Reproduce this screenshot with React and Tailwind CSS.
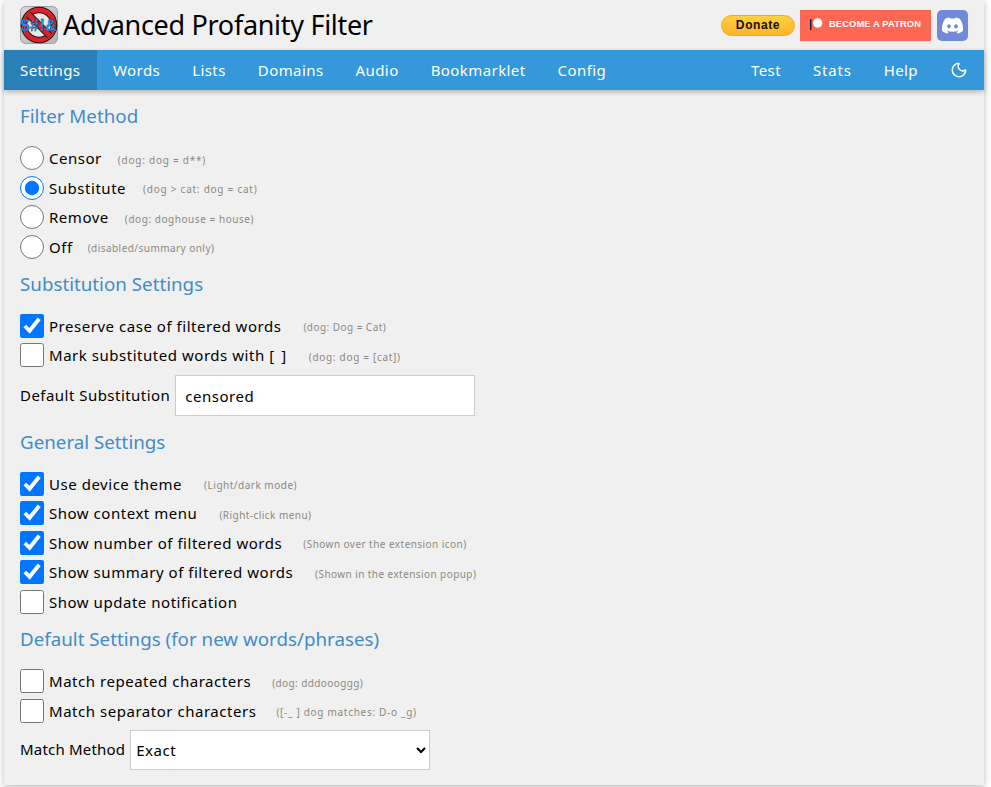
import React from 'react';
import { Moon } from 'lucide-react';
import { FaDiscord } from 'react-icons/fa';

const navLeft = ['Settings', 'Words', 'Lists', 'Domains', 'Audio', 'Bookmarklet', 'Config'];
const navRight = ['Test', 'Stats', 'Help'];

function Logo() {
  return (
    <svg width="38" height="38" viewBox="0 0 38 38" className="shrink-0">
      <defs>
        <linearGradient id="logoBg" x1="0" y1="0" x2="1" y2="1">
          <stop offset="0" stopColor="#d8d8d8" />
          <stop offset="1" stopColor="#b4b4b4" />
        </linearGradient>
      </defs>
      <rect x="0.5" y="0.5" width="37" height="37" rx="5" fill="url(#logoBg)" stroke="#a0a0a0" />
      <circle cx="19" cy="19" r="15" fill="#e8e8e8" stroke="#1a1a1a" strokeWidth="6.5" />
      <circle cx="19" cy="19" r="15" fill="none" stroke="#e3202a" strokeWidth="4.5" />
      <path d="M8.5 8.5 L29.5 29.5" stroke="#1a1a1a" strokeWidth="7" />
      <path d="M8.5 8.5 L29.5 29.5" stroke="#e3202a" strokeWidth="5" />
      <text x="19" y="25" textAnchor="middle" fontSize="17" fontWeight="700" textLength="37" lengthAdjust="spacingAndGlyphs" fontFamily="'Liberation Sans', sans-serif" fill="#12a0f0" stroke="#06204a" strokeWidth="0.3">$#!&amp;</text>
    </svg>
  );
}

function Heading({ children, tight }) {
  return <h4 className={`h-[30px] leading-[30px] ${tight ? 'mb-[12px]' : 'mb-[12.5px]'} text-[18.75px] font-normal tracking-normal text-[#428bca]`}>{children}</h4>;
}

function Row({ type = 'checkbox', checked, label, note, gap = 'ml-[16px]', nt = 'tracking-[0.55px]' }) {
  return (
    <label className="flex items-center h-[29.5px]">
      <input type={type} checked={!!checked} readOnly name={type === 'radio' ? 'filter' : undefined} className="w-6 h-6 m-0 shrink-0 accent-[#0075ff]" />
      <span className="ml-[5px] whitespace-pre">{label}</span>
      {note && <span className={`${gap} ${nt} mt-[4px] text-[10px] text-[#8c8880]`}>{note}</span>}
    </label>
  );
}

export default function App() {
  return (
    <div className="min-h-[787px] bg-white font-['Noto_Sans',sans-serif] text-[15px] tracking-[0.53px] text-black overflow-hidden">
      <div className="ml-[4px] w-[980px] h-[785px] bg-[#f0f0f0] shadow-[0_2px_5px_rgba(0,0,0,0.16),0_2px_10px_rgba(0,0,0,0.12)]">
        <header className="h-[50px] flex items-center pl-[16px] pr-[16px]">
          <Logo />
          <h1 className="ml-[5px] text-[27px] font-normal tracking-[-0.3px] leading-[50px]">Advanced Profanity Filter</h1>
          <div className="ml-auto flex items-center">
            <button className="w-[74px] h-[21px] rounded-full border border-[#f0a820] bg-gradient-to-b from-[#ffd040] to-[#fdb428] text-[12px] font-bold text-[#111] tracking-[0.6px] font-['Liberation_Sans',sans-serif] leading-none">Donate</button>
            <button className="ml-[5px] w-[131px] h-[31px] pl-[10px] bg-[#ff6755] flex items-center justify-start text-white text-[9.3px] font-bold tracking-[0.15px] font-['Liberation_Sans',sans-serif]">
              <svg width="13" height="13" viewBox="0 0 13 13" className="mr-[6px] -mt-[1px]">
                <rect x="0" y="1" width="1.5" height="11" fill="#052d49" />
                <circle cx="7.6" cy="5" r="4.7" fill="#fff" />
              </svg>
              BECOME A PATRON
            </button>
            <div className="ml-[6px] w-[31px] h-[31px] rounded-[5px] bg-[#7289da] flex items-center justify-center text-white">
              <FaDiscord size={23} />
            </div>
          </div>
        </header>
        <nav className="h-[40px] bg-[#3498db] flex items-center text-white tracking-[0.42px] shadow-[0_2px_5px_rgba(0,0,0,0.25)]">
          {navLeft.map((n, i) => (
            <div key={n} className={`h-full px-[16px] flex items-center ${i === 0 ? 'bg-[#2980b9] w-[93px]' : ''}`}>{n}</div>
          ))}
          <div className="ml-auto flex items-center h-full">
            {navRight.map((n) => (
              <div key={n} className={`h-full px-[16px] flex items-center ${n === 'Stats' ? 'tracking-[0.8px]' : ''}`}>{n}</div>
            ))}
            <div className="h-full px-[16px] flex items-center"><Moon size={18} /></div>
          </div>
        </nav>
        <main className="px-[16px] pt-[11px]">
          <section className="mb-[7px]">
            <Heading>Filter Method</Heading>
            <Row type="radio" label="Censor" note="(dog: dog = d**)" nt="tracking-[0.75px]" />
            <Row type="radio" checked label="Substitute" note="(dog > cat: dog = cat)" gap="ml-[17px]" nt="tracking-[0.75px]" />
            <Row type="radio" label="Remove" note="(dog: doghouse = house)" />
            <Row type="radio" label="Off" note="(disabled/summary only)" gap="ml-[15px]" nt="tracking-[0.45px]" />
          </section>
          <section className="mb-[11px]">
            <Heading>Substitution Settings</Heading>
            <Row checked label="Preserve case of filtered words" note="(dog: Dog = Cat)" gap="ml-[22px]" nt="tracking-[0.45px]" />
            <Row label={<>Mark substituted words with <span className="tracking-[1.6px]">[ ]</span></>} note="(dog: dog = [cat])" gap="ml-[21px]" nt="tracking-[0.7px]" />
            <div className="flex items-center mt-[5px]">
              <span className="tracking-[0.47px]">Default Substitution</span>
              <input readOnly value="censored" className="ml-[5px] w-[300px] h-[41px] px-[9px] bg-white border border-[#ccc] outline-none tracking-[0.5px]" />
            </div>
          </section>
          <section className="mb-[7.5px]">
            <Heading tight>General Settings</Heading>
            <Row checked label="Use device theme" note="(Light/dark mode)" gap="ml-[22px]" nt="tracking-[0.5px]" />
            <Row checked label="Show context menu" note="(Right-click menu)" gap="ml-[22px]" nt="tracking-[0.45px]" />
            <Row checked label="Show number of filtered words" note="(Shown over the extension icon)" gap="ml-[21px]" nt="tracking-[0.45px]" />
            <Row checked label="Show summary of filtered words" note="(Shown in the extension popup)" gap="ml-[22px]" nt="tracking-[0.42px]" />
            <Row label="Show update notification" />
          </section>
          <section>
            <Heading>Default Settings (for new words/phrases)</Heading>
            <Row label="Match repeated characters" note="(dog: dddoooggg)" gap="ml-[21px]" nt="tracking-[0.4px]" />
            <Row label="Match separator characters" note="([-_ ] dog matches: D-o _g)" gap="ml-[20px]" nt="tracking-[0.7px]" />
            <div className="flex items-center mt-[4px]">
              <span className="tracking-[0.2px]">Match Method</span>
              <select defaultValue="Exact" className="ml-[5px] w-[300px] h-[40px] pl-[1px] bg-white border border-[#ccc] outline-none tracking-[0.5px]">
                <option>Exact</option>
                <option>Partial</option>
                <option>Whole</option>
              </select>
            </div>
          </section>
        </main>
      </div>
    </div>
  );
}
